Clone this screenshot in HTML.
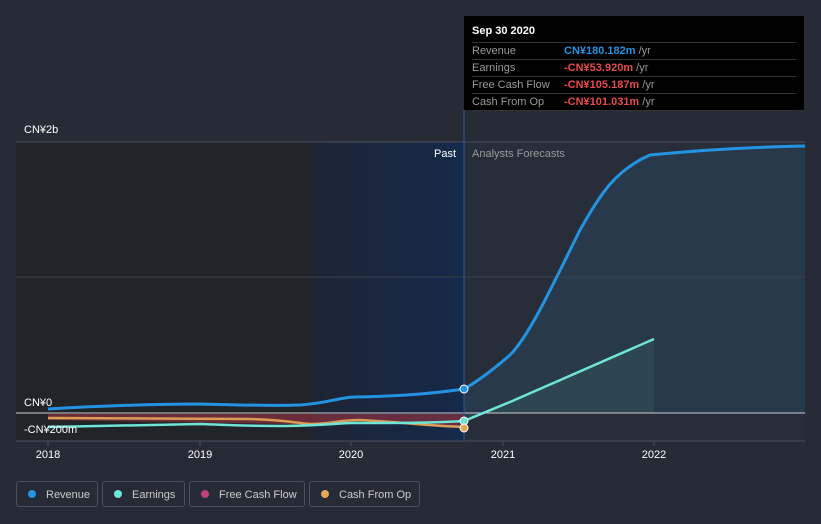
<!DOCTYPE html>
<html><head><meta charset="utf-8"><style>
body{margin:0;width:821px;height:524px;background:#262b36;font-family:"Liberation Sans",sans-serif;overflow:hidden;position:relative}
.tt{position:absolute;left:464px;top:16px;width:340px;height:94px;background:#000;color:#fff;font-size:11px}
.tt .h{font-weight:bold;padding:9px 0 0 8px;height:17px}
.tt .r{margin:0 8px;border-top:1px solid #333;height:16px;line-height:16px;color:#999}
.tt .r span{position:absolute;left:100px;font-weight:bold}
.tt .r b{color:#999;font-weight:normal}
.leg{position:absolute;top:481px;height:26px;border:1px solid #4a505c;border-radius:3px;color:#ccc;font-size:11px;line-height:26px;box-sizing:border-box}
.leg i{display:inline-block;width:8px;height:8px;border-radius:50%;margin:0 10px 0 11px;vertical-align:-0px}
</style></head><body>
<svg width="821" height="524" style="position:absolute;left:0;top:0">
<defs><linearGradient id="g" x1="0" x2="1"><stop offset="0" stop-color="#1d2534"/><stop offset="1" stop-color="#15294a"/></linearGradient></defs>
<rect x="16" y="142" width="296" height="299" fill="#212429"/>
<rect x="312" y="142" width="152" height="299" fill="url(#g)"/>
<rect x="464" y="142" width="341" height="299" fill="#272e3a"/>
<path d="M464,389 C480,380 495,368 510,355 C530,335 555,280 580,230 C600,195 615,170 650,155 C700,150 750,147 805,146 L805,413 L464,413Z" fill="#2a3e52" opacity="0.75"/>
<path d="M464,421 L510,402 L654,339 L654,413 L464,413Z" fill="#2f4c52" opacity="0.7"/>
<line x1="16" y1="142" x2="805" y2="142" stroke="#4a505c"/>
<line x1="16" y1="277" x2="805" y2="277" stroke="#3a404c"/>
<line x1="16" y1="441" x2="805" y2="441" stroke="#4a505c"/>
<path d="M48,414 L464,414 L464,428 C400,425 380,421 350,421 C320,422 310,426 290,424 L48,420Z" fill="#8a3040" opacity="0.7"/>
<line x1="16" y1="413" x2="805" y2="413" stroke="#ccc" stroke-width="1"/>
<line x1="464" y1="110" x2="464" y2="441" stroke="#2b5a9c"/>
<path d="M48,418 L250,419 C290,420 300,424 312,424 C330,424 340,420 360,420 C400,422 430,426 464,427" stroke="#e8a858" stroke-width="2.5" fill="none" opacity="0.9"/>
<path d="M48,427 L200,424 C230,425 240,426 280,426 C310,426 330,424 350,423 C400,423 430,423 464,421 L510,402 L654,339" stroke="#6ee5d6" stroke-width="2.5" fill="none"/>
<path d="M48,409 C100,406 150,404 200,404 C240,405 270,406 300,405 C330,403 340,397 355,397 C400,396 430,394 464,389 C480,380 495,368 510,355 C530,335 555,280 580,230 C600,195 615,170 650,155 C700,150 750,147 805,146" stroke="#2394e3" stroke-width="3" fill="none"/>
<circle cx="464" cy="389" r="4" fill="#2394e3" stroke="#fff" stroke-width="1"/>
<circle cx="464" cy="421" r="4" fill="#6ee5d6" stroke="#fff" stroke-width="1"/>
<circle cx="464" cy="428" r="4" fill="#e8a858" stroke="#fff" stroke-width="1"/>
<g font-size="11" fill="#fff" font-family="Liberation Sans">
<text x="24" y="133">CN¥2b</text><text x="24" y="406">CN¥0</text><text x="24" y="433">-CN¥200m</text>
<text x="48" y="458" text-anchor="middle">2018</text><text x="200" y="458" text-anchor="middle">2019</text><text x="351" y="458" text-anchor="middle">2020</text><text x="503" y="458" text-anchor="middle">2021</text><text x="654" y="458" text-anchor="middle">2022</text>
<text x="456" y="157" text-anchor="end">Past</text><text x="472" y="157" fill="#999">Analysts Forecasts</text>
</g>
<g stroke="#4a505c"><line x1="48" y1="441" x2="48" y2="446"/><line x1="200" y1="441" x2="200" y2="446"/><line x1="351" y1="441" x2="351" y2="446"/><line x1="503" y1="441" x2="503" y2="446"/><line x1="654" y1="441" x2="654" y2="446"/></g>
</svg>
<div class="tt"><div class="h">Sep 30 2020</div>
<div class="r">Revenue<span style="color:#2394e3">CN¥180.182m <b>/yr</b></span></div>
<div class="r">Earnings<span style="color:#e84a4a">-CN¥53.920m <b>/yr</b></span></div>
<div class="r">Free Cash Flow<span style="color:#e84a4a">-CN¥105.187m <b>/yr</b></span></div>
<div class="r" style="border-bottom:1px solid #333">Cash From Op<span style="color:#e84a4a">-CN¥101.031m <b>/yr</b></span></div>
</div>
<div class="leg" style="left:16px;width:82px"><i style="background:#2394e3"></i>Revenue</div>
<div class="leg" style="left:102px;width:83px"><i style="background:#6ee5d6"></i>Earnings</div>
<div class="leg" style="left:189px;width:116px"><i style="background:#c0407a"></i>Free Cash Flow</div>
<div class="leg" style="left:309px;width:111px"><i style="background:#e8a858"></i>Cash From Op</div>
</body></html>
